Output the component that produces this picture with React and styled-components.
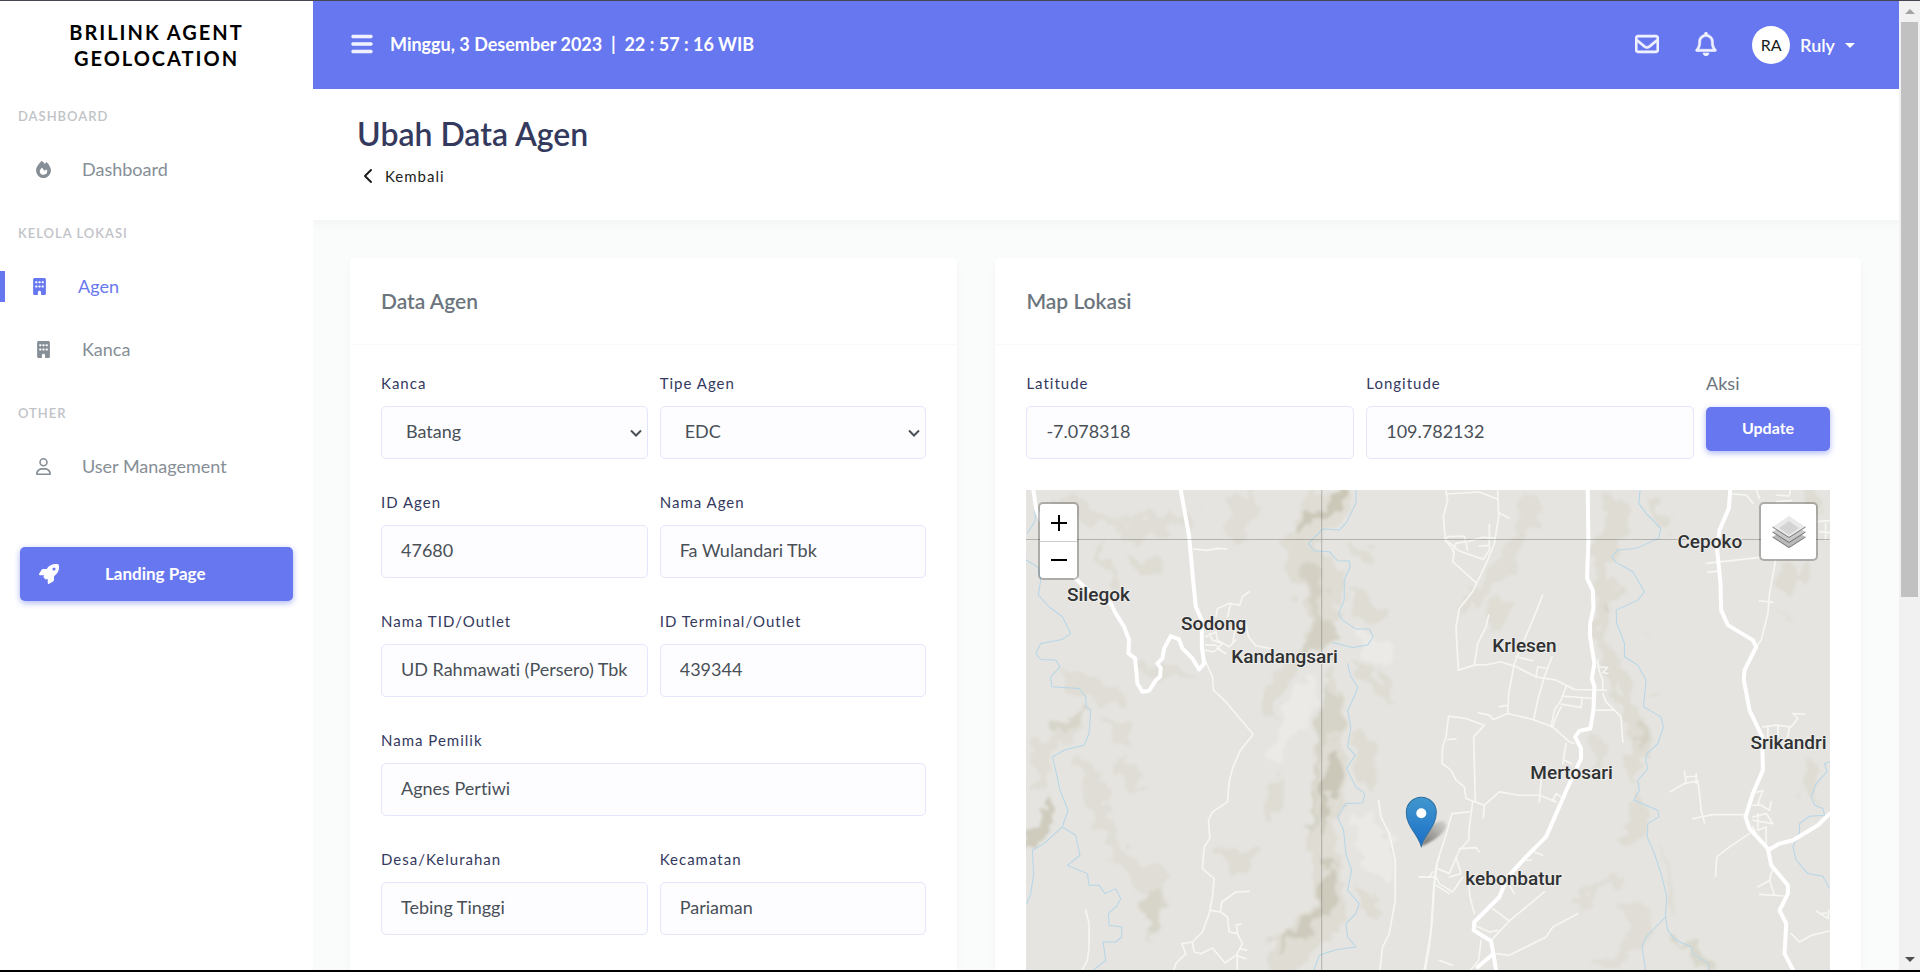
import React from "react";
import styled, { createGlobalStyle } from "styled-components";
import {
  FaBars,
  FaBuilding,
  FaChevronLeft,
  FaFire,
  FaRegBell,
  FaRegEnvelope,
  FaRegUser,
  FaRocket,
} from "react-icons/fa6";

const color = {
  primary: "#6777ef",
  heading: "#34395e",
  muted: "#6c757d",
  nav: "#868e96",
  field: "#495057",
};

const GlobalStyle = createGlobalStyle`
  *, *::before, *::after { box-sizing: border-box; }
  body {
    margin: 0;
    background: #fff;
    color: ${color.muted};
    font: 400 18px/24px Lato, "Open Sans", sans-serif;
    font-variant-ligatures: none;
  }
  button, input, select { font: inherit; font-variant-ligatures: none; }
  a { color: inherit; text-decoration: none; }
  h1, h2, p, ul { margin: 0; padding: 0; }
`;

/* ---------- frame ---------- */

const Shell = styled.div`
  display: flex;
  height: 100vh;
  overflow: hidden;
  border-top: 1px solid #44454f;
  border-bottom: 2px solid #000;
`;

const Sidebar = styled.aside`
  flex: 0 0 313px;
  background: #fff;
`;

const Main = styled.main`
  flex: 1;
  min-width: 0;
  height: 100%;
  overflow: hidden;
  background: #fafcfb;
`;

const Scrollbar = styled.div`
  flex: 0 0 21px;
  display: flex;
  flex-direction: column;
  align-items: center;
  background: #f1f1f1;
`;

const ScrollArrow = styled.span`
  flex: 0 0 21px;
  display: grid;
  place-items: center;
  &::before {
    content: "";
    border: 5px solid transparent;
    border-top-width: ${(p) => (p.$up ? 0 : "5px")};
    border-bottom-width: ${(p) => (p.$up ? "5px" : 0)};
    border-top-color: ${(p) => (p.$up ? "transparent" : "#505050")};
    border-bottom-color: ${(p) => (p.$up ? "#a3a3a3" : "transparent")};
  }
`;

const ScrollTrack = styled.div`
  flex: 1;
  width: 17px;
`;

const ScrollThumb = styled.div`
  height: 62%;
  background: #c1c1c1;
`;

/* ---------- sidebar ---------- */

const Brand = styled.a`
  display: block;
  padding: 18px 50px 14px;
  color: #000;
  font-size: 20px;
  font-weight: 700;
  line-height: 26px;
  letter-spacing: 2px;
  text-align: center;
  text-transform: uppercase;
`;

const NavHeading = styled.p`
  padding: 19px 18px 10px;
  color: #bfc3c7;
  font-size: 13px;
  font-weight: 600;
  line-height: 25px;
  letter-spacing: 1px;
  text-transform: uppercase;
`;

const NavList = styled.ul`
  list-style: none;
`;

const NavLink = styled.a`
  display: flex;
  align-items: center;
  height: 63px;
  padding: 0 0 3px ${(p) => (p.$active ? 0 : 19)}px;
  color: ${(p) => (p.$active ? color.primary : color.nav)};
  &::before {
    content: "";
    display: ${(p) => (p.$active ? "block" : "none")};
    width: 5px;
    height: 31px;
    margin-right: 10px;
    background: ${color.primary};
  }
`;

const NavIcon = styled.span`
  flex: 0 0 48px;
  margin-right: 15px;
  display: grid;
  place-items: center;
  font-size: 17px;
`;

const LandingLink = styled.a`
  display: flex;
  align-items: center;
  height: 54px;
  margin: 48px 20px 0;
  padding-left: 19px;
  border-radius: 5px;
  background: ${color.primary};
  box-shadow: 0 2px 6px #acb5f6;
  color: #fff;
  font-size: 17px;
  font-weight: 700;
  svg {
    width: 20px;
    height: 20px;
    margin-right: 46px;
  }
`;

/* ---------- top bar and page header ---------- */

const TopBar = styled.header`
  display: flex;
  align-items: center;
  height: 88px;
  padding: 0 44px 3px 37px;
  background: ${color.primary};
  color: #fff;
`;

const BarButton = styled.button`
  display: grid;
  place-items: center;
  width: ${(p) => p.$width}px;
  height: 44px;
  padding: 0;
  border: 0;
  background: none;
  color: #f0f1ff;
  font-size: 24px;
  cursor: pointer;
  svg {
    stroke: currentColor;
    stroke-width: 12px;
  }
`;

const Clock = styled.time`
  flex: 1;
  margin-left: 19px;
  font-weight: 700;
  white-space: pre;
`;

const BarActions = styled.div`
  display: flex;
  align-items: center;
  gap: 34px;
`;

const UserMenu = styled.button`
  display: flex;
  align-items: center;
  gap: 10px;
  padding: 3px 0 0;
  border: 0;
  background: none;
  color: #fff;
  font-weight: 600;
  cursor: pointer;
  &::after {
    content: "";
    border: 5px solid transparent;
    border-top-color: #fff;
    border-bottom: 0;
  }
`;

const Avatar = styled.span`
  display: grid;
  place-items: center;
  width: 38px;
  height: 38px;
  border-radius: 50%;
  background: #fff;
  color: #191d21;
  font-size: 16px;
  font-weight: 400;
`;

const PageHeader = styled.section`
  height: 131px;
  padding: 25px 44px 0;
  background: #fff;
  box-shadow: 0 4px 8px rgba(0, 0, 0, 0.03);
`;

const PageTitle = styled.h1`
  color: ${color.heading};
  font-size: 32px;
  font-weight: 600;
  line-height: 40px;
`;

const BackLink = styled.a`
  display: inline-flex;
  align-items: center;
  gap: 9px;
  margin-top: 10px;
  padding-left: 5px;
  color: #191d21;
  font-size: 15px;
  letter-spacing: 1px;
  svg {
    width: 14px;
    height: 16px;
  }
`;

/* ---------- cards and form ---------- */

const Content = styled.div`
  display: grid;
  grid-template-columns: repeat(12, minmax(0, 1fr));
  column-gap: 38px;
  padding: 38px 38px 38px 37px;
`;

const Card = styled.section`
  grid-column: span ${(p) => p.$span};
  border-radius: 4px;
  background: #fff;
  box-shadow: 0 4px 8px rgba(0, 0, 0, 0.03);
`;

const CardTitle = styled.h2`
  padding: 30px 31px 31px;
  border-bottom: 1px solid #f9f9f9;
  color: ${color.muted};
  font-size: 21px;
  font-weight: 600;
  line-height: 25px;
`;

const CardBody = styled.div`
  padding: 26px 31px 31px;
`;

const FormGrid = styled.form`
  display: grid;
  grid-template-columns: repeat(12, minmax(0, 1fr));
  column-gap: 12px;
`;

const Field = styled.div`
  position: relative;
  grid-column: span ${(p) => p.$span};
  display: flex;
  flex-direction: column;
  margin-bottom: 31px;
`;

const Label = styled.label`
  margin-bottom: 10px;
  color: ${color.heading};
  font-size: 15px;
  line-height: 25px;
  letter-spacing: 1px;
`;

const control = `
  width: 100%;
  height: 53px;
  border: 1px solid #e4e6fc;
  border-radius: 5px;
  background: #fdfdff;
  color: ${color.field};
`;

const TextBox = styled.input`
  ${control}
  padding: 0 16px 3px 19px;
`;

const SelectBox = styled.select`
  ${control}
  appearance: none;
  padding: 0 24px 3px;
`;

const SelectArrow = styled.svg`
  position: absolute;
  right: 6px;
  bottom: 20px;
  width: 12px;
  height: 12px;
  pointer-events: none;
`;

const ActionTitle = styled.p`
  margin-bottom: 11px;
  line-height: 25px;
`;

const SubmitButton = styled.button`
  height: 44px;
  padding: 0 0 2px;
  border: 0;
  border-radius: 5px;
  background: ${color.primary};
  box-shadow: 0 2px 6px #acb5f6;
  color: #fff;
  font-size: 16px;
  font-weight: 700;
  cursor: pointer;
`;

/* ---------- map ---------- */

const MapFrame = styled.div`
  position: relative;
  height: 625px;
  background: #e5e4e0;
`;

const MapDrawing = styled.svg`
  display: block;
  width: 100%;
  height: 100%;
  text {
    fill: #303234;
    stroke: #eeedea;
    stroke-width: 2px;
    paint-order: stroke;
    font: 500 19px Roboto, sans-serif;
  }
`;

const MapControl = styled.div`
  position: absolute;
  top: 12px;
  ${(p) => p.$side}: 12px;
  border: 2px solid rgba(0, 0, 0, 0.25);
  border-radius: 5px;
  background: #fff;
  background-clip: padding-box;
`;

const MapButton = styled.button`
  display: grid;
  place-items: center;
  width: ${(p) => p.$size}px;
  height: ${(p) => p.$size}px;
  padding: 0;
  border: 0;
  background: none;
  cursor: pointer;
  & + & {
    border-top: 1px solid #ccc;
  }
`;

const WEST = "translate(-27 -10) scale(0.33333)";
const EAST = "translate(393 -10) scale(0.33333)";

const shade = [
  ["#dfddd4", "M960 30H1060C1065 70 1050 120 1000 135 960 150 940 200 930 230 890 280 860 250 850 215 850 150 900 110 960 30Z"],
  ["#cbc8b8", "M1000 30H1045C1045 80 1010 105 970 120 930 140 900 165 885 165 880 130 930 110 955 95 985 80 990 50 1000 30Z"],
  ["#dedcd3", "M850 215C900 190 960 190 1000 240 1040 280 1030 340 1020 390 1015 440 990 480 960 500 910 540 880 570 850 620 840 660 820 710 800 720 760 720 770 670 800 620 830 580 880 530 920 500 940 450 920 370 900 330 880 300 850 250 850 215Z"],
  ["#d4d1c4", "M930 240C970 260 975 300 975 330 965 370 960 400 985 430 1000 440 1010 450 1010 460 990 490 940 520 915 540 890 540 910 500 940 460 945 420 930 390 920 340 910 300 910 260 930 240Z"],
  ["#dedcd3", "M985 560C1010 580 1030 620 1025 700 1020 730 1035 800 1040 920 1030 960 1010 980 1010 1000 1005 1060 1015 1120 1040 1220 1040 1280 1030 1330 1000 1370 960 1400 940 1420 900 1468H810C810 1420 820 1380 830 1370 860 1360 900 1340 940 1240 935 1160 925 1120 925 1080 940 980 950 940 950 900 940 820 930 780 970 650Z"],
  ["#cbc8b9", "M1000 810C1030 820 1030 870 1020 900 1000 930 1000 1000 985 1050 970 1090 960 1060 970 980 975 920 980 850 1000 810Z"],
  ["#cecbbd", "M985 1140C1010 1150 1020 1200 1010 1270 990 1310 950 1330 900 1370 870 1400 850 1420 845 1420 840 1390 870 1350 920 1330 950 1290 970 1200 985 1140Z"],
  ["#d6d4c8", "M985 620C1010 620 1020 680 1010 740 980 790 960 850 955 890 960 950 955 1010 940 1050 920 1070 935 1000 935 950 950 890 950 830 950 760 960 700 985 620Z"],
  ["#dfddd5", "M81 800C130 790 170 780 210 720 230 690 240 665 245 665 260 720 250 750 230 770 190 790 165 800 160 820 150 870 140 920 110 920 81 890Z"],
  ["#cfccbe", "M150 945C190 960 185 1020 165 1040 140 1070 110 1100 81 1115V1050C110 1040 130 1020 130 980Z"],
  ["#dfddd5", "M160 50C220 50 250 60 300 100 350 110 390 110 400 150 350 150 310 140 270 130 240 130 190 90 160 50Z"],
  ["#dfddd5", "M440 90C480 110 540 110 590 110 590 150 560 150 520 140 490 160 440 175 380 180 370 150 410 110 440 90Z"],
  ["#dedcd3", "M300 190C320 190 320 230 330 250 370 280 370 300 360 320 330 310 290 260 290 230ZM370 220C420 220 470 240 480 270 470 300 440 290 400 270Z"],
  ["#dfddd5", "M660 50C710 40 750 60 770 40 780 80 760 130 730 150 710 180 690 190 680 170 690 140 700 120 700 90Z"],
  ["#dfddd5", "M400 545C440 560 540 550 590 570 580 600 510 600 470 580 430 580 410 580 400 570ZM180 590C240 560 320 600 380 640 400 660 380 680 310 670 260 660 220 640 180 590Z"],
  ["#dfddd5", "M240 830C290 840 310 920 320 960 340 1030 370 1090 440 1160 490 1150 500 1180 500 1200 500 1250 480 1290 470 1370 440 1380 430 1350 440 1240 400 1200 350 1190 300 1040 270 980 240 900 240 830Z"],
  ["#dfddd5", "M350 820C400 830 410 870 420 900 450 910 470 920 450 930 400 930 370 900 350 870ZM310 720C360 730 400 740 400 760 410 820 380 810 350 790Z"],
  ["#dedcd3", "M650 1100C700 1100 720 1130 760 1110 780 1140 760 1180 700 1180 670 1160 650 1130 650 1100ZM850 885C870 920 850 980 800 1010 780 1000 810 950 850 885Z"],
  ["#dedcd3", "M1040 190C1100 190 1130 210 1140 250 1110 260 1080 250 1040 190ZM1050 320C1110 330 1160 370 1170 410 1160 450 1110 440 1080 420 1060 390 1050 360 1050 320ZM1060 550C1110 550 1170 600 1195 660 1160 660 1120 650 1060 550ZM1060 760C1110 770 1140 810 1130 930 1100 930 1080 900 1060 760ZM1060 1220C1120 1230 1160 1270 1150 1310 1110 1310 1080 1290 1060 1220Z"],
  ["#d7d5c9", "M455 1220C490 1220 490 1260 475 1300 470 1350 450 1370 440 1340 440 1300 440 1250 455 1220ZM155 740C200 740 230 700 240 670 260 700 230 740 200 760 170 770 150 760 155 740Z"],
  ["#ebeae7", "M930 580C970 600 950 640 940 680 910 740 860 790 850 840 820 880 800 860 830 760 850 700 900 620 930 580Z"],
  ["#ebeae7", "M1080 460C1150 460 1220 480 1180 550 1120 560 1070 520 1080 460ZM1070 1000C1130 1010 1180 1060 1180 1120 1190 1170 1160 1220 1100 1180 1070 1120 1060 1060 1070 1000Z"],
];

const shadeEast = [
  ["#dfddd5", "M310 40C350 30 390 40 350 130 320 170 300 220 280 270 240 310 210 330 170 370 150 390 120 390 150 340 190 310 220 260 250 200 290 150 310 90 310 40Z"],
  ["#dedcd3", "M540 40C580 40 640 80 640 120 640 150 600 160 590 220 550 240 550 300 610 330 600 370 570 390 560 400 550 440 560 500 600 540 620 590 620 650 690 750 690 810 670 860 640 900 610 910 620 820 640 780 620 730 600 690 590 620 550 580 530 520 520 440 520 360 510 290 525 230 540 180 590 140 540 40Z"],
  ["#d5d2c4", "M560 380C580 370 590 385 565 405ZM655 740C680 740 680 790 655 790Z"],
  ["#dedcd3", "M670 50C710 60 750 100 750 130 740 180 710 150 670 50ZM640 900C690 950 710 1000 670 1060 640 1100 600 1100 600 1070 640 1020 650 960 640 900Z"],
  ["#dfddd5", "M510 760C560 760 590 790 570 830 540 860 510 870 500 860 530 820 520 790 510 760ZM600 1270C660 1270 710 1300 700 1350 690 1390 640 1410 600 1468H520C540 1430 600 1400 640 1380 650 1340 620 1300 600 1270Z"],
  ["#dfddd5", "M480 1220C530 1200 570 1210 600 1180 620 1200 600 1240 510 1240 500 1260 510 1290 480 1300 470 1260 480 1240 480 1220ZM720 1080C750 1130 770 1260 780 1310 740 1300 740 1200 720 1080Z"],
  ["#dedcd3", "M1070 240C1130 230 1170 260 1150 310 1130 340 1110 350 1070 330ZM1090 390C1120 400 1120 430 1110 430ZM1160 30C1210 40 1210 100 1190 130 1150 140 1150 80 1160 30ZM1170 840C1220 840 1190 900 1180 920 1190 970 1180 1000 1160 950 1140 910 1150 870 1170 840Z"],
  ["#dad8cc", "M750 1360C800 1380 860 1400 880 1440V1468C820 1450 800 1410 750 1360Z"],
  ["#dfddd4", "M210 370C250 350 290 370 280 400 260 440 220 460 200 430ZM655 470C690 470 700 490 680 490ZM700 620C730 640 720 650 700 650Z"],
];

const rivers = [
  "M105 90C120 120 95 140 85 160M81 240 118 262 125 300 118 345 150 380 190 410 215 460 190 478 125 490 110 520 125 538 170 540 183 560 155 590 158 620 240 625 260 650 262 680 275 690 270 760 255 795 200 808 160 830 170 870 183 930 207 990 190 1040 135 1090 100 1110 104 1180 95 1240 84 1270",
  "M190 1040 230 1065 243 1125 205 1155 265 1180 270 1215 300 1215 318 1240 350 1225 365 1255 355 1275 328 1300 330 1335 368 1340 368 1370 350 1385 312 1385 320 1440 285 1468",
  "M1070 30V70L1040 130 1020 150 970 147 928 190 945 212 990 215 1015 242 1050 243 1053 260 1035 300V360L1018 400 1030 420 1070 447 1110 447 1122 470 1105 495 1060 502 1000 487",
  "M1045 550 1055 590 1075 620 1065 650 1045 690 1055 740 1045 800 1068 825 1042 865 1070 920 1097 940 1090 968 1040 970 1015 1010 1033 1050 1040 1120 1057 1170 1045 1230 1080 1270 1070 1300 1040 1330 1045 1370 1070 1400 1010 1408 960 1425 945 1468",
];

const riversEast = [
  "M662 30 658 70 680 100 724 145 718 175 650 205 595 210 577 230 590 247 640 275 675 335 655 360 590 390 592 430 615 490V530L655 555 680 600 672 680 725 710 732 740 715 790 683 820 678 840 686 865 655 900 660 930 643 960 715 990 718 1010 685 1030 683 1070 705 1120 725 1180 742 1250 738 1310 680 1370 668 1400 678 1468M738 1310 745 1350 770 1380 815 1400 820 1420 868 1450V1468",
  "M1230 845 1215 850 1222 875 1190 910 1175 950 1185 975 1210 985 1215 1005 1170 1008 1140 1030V1055L1120 1100 1130 1140 1165 1180 1210 1188 1228 1222",
];

const lanes = [
  "M583 207 625 211 655 205 683 207",
  "M650 410 655 385 690 370 722 375 730 350 750 335M695 370 685 410M740 430 748 470 770 497 815 505",
  "M620 470 650 455 655 480 690 500 710 480M615 510 645 515 670 490 640 480 630 460M655 505 680 520M620 495 650 495 665 510M710 440 700 490",
  "M620 545 640 590 643 630 680 665 762 762 723 812 700 865 690 905 685 965 640 995 628 1020 632 1075 615 1100 610 1165 645 1195 640 1250 630 1300 610 1355 580 1385 548 1390 560 1420 530 1450 525 1468",
  "M580 1385 585 1415 605 1420 640 1403 678 1448 710 1425 740 1435M635 1290 665 1295 685 1310 690 1355 715 1360 730 1390 714 1420V1468M665 1290 668 1265 710 1235 750 1233M715 1360 712 1335 725 1330M725 1405 742 1410",
  "M260 1290 270 1330V1400L265 1440 250 1468M1138 960 1145 1010 1170 1060 1188 1140V1260L1170 1360 1150 1400 1142 1468M1275 1468 1295 1350 1303 1220 1310 1160 1320 1130M1262 1190 1290 1190 1300 1175",
];

const lanesEast = [
  "M80 30 85 60 72 110 78 180 105 215 100 245 170 308M80 42 180 36 235 58M235 30 238 110 225 190 205 240 160 335 120 385 110 440 117 570 165 555 205 553 245 545 290 560 350 590 410 600 465 628 560 630",
  "M238 98 270 115M210 132V210L192 238 118 212 90 188 78 182 85 170 135 168 145 210M100 215 110 190 135 185M145 185 190 172 225 175M180 198 210 196",
  "M370 345 340 420 310 490 285 550 268 640 265 700M208 405 200 440 175 490 165 555M398 530 375 590 355 660 343 718M350 590 355 560 385 565 375 590M290 530 340 542",
  "M88 708 140 715 195 735M178 698 210 705 222 718 265 700 340 718 400 740 450 785 465 790M240 680 265 675M195 735 163 770 165 850 168 965M88 708 80 770 70 800 68 850 95 870 110 900 135 920 140 955 195 975 240 935 300 945 360 945 410 965M85 778 110 776",
  "M195 975 192 1012M160 965 150 1040 148 1080 120 1110 90 1180 55 1165M150 995 98 1000 75 1080 55 1140 45 1220 38 1330 30 1400 18 1468M120 1105 170 1102 180 1115M110 1130 125 1180 90 1190M0 1190 50 1190 60 1210 100 1235 130 1190M50 1215 90 1240M145 1180 152 1250 165 1300",
  "M440 620 425 660 405 690 395 740M430 648 525 655M425 672 485 682 488 655M465 628 440 615M400 740 410 710 425 680M535 540 540 575 550 600V628M535 560 565 562 550 577 565 580M550 640 560 665 605 710 610 785M530 690 580 690M430 850 440 790M435 840 455 850M360 965 365 900M400 960 410 940 425 950",
  "M220 1285 270 1322 375 1235M270 1322 220 1375M165 1335 210 1355 235 1350M185 1380 178 1440 155 1468M230 1420 270 1425 380 1370 400 1340 475 1300M60 1440 100 1455M320 1140 335 1140M345 1115 370 1125M270 1215 285 1240",
  "M862 250 1020 232M865 277 895 273M1068 240 1050 340 1045 400 1025 480 1010 500M1020 362 1060 367M940 42 980 45 1000 70M1010 30 1020 55M1070 45 1110 48 1112 30M1070 65 1115 62M1195 125 1230 122M1200 155 1230 158M1218 130V180",
  "M1030 740 1070 735 1115 740 1135 715 1120 700 1155 702M1045 740V780M1075 735V770M1110 740 1100 790",
  "M752 935 795 910 835 902 840 940 845 990 855 1028M795 875 800 910M830 880V910M800 890 830 888M820 1015 880 1003 975 1003M888 1188 892 1130 930 1100 990 1060",
  "M1000 940 1030 930 1015 970 1050 990 1055 965M1000 1010 1040 1000 1060 1030 1000 1020M1000 975 1030 975M1015 1000V1050L1040 1040V1090M1010 1060 1000 1040M1060 1160 1050 1200 1015 1220M1050 1200 1065 1245M1020 1242 1090 1247M1115 1360 1140 1385 1175 1365 1230 1352M1190 1292 1225 1315 1228 1290M1205 1300 1220 1298",
];

const roads = [
  "M103 30 112 90 125 120M225 290 250 315 290 350 335 370 350 400 375 440 390 480 388 520 408 535 415 610 430 635 450 632 470 600 483 590 485 565 475 550 490 535 495 505 515 468 540 478 550 505 580 535 600 568 615 550 608 500 608 420 590 380 582 300 570 170 545 30",
];

const roadsEast = [
  "M505 30 507 180 503 295 520 330 522 385 512 430 512 470 525 550 517 595 525 620 522 690 513 745 480 752 467 770 485 805 485 835 450 910 415 990 380 1070 320 1130 265 1190 240 1250 165 1325 163 1350 215 1382 222 1420 175 1460M222 1420 230 1468",
  "M932 30 928 85 900 150 893 210 903 310 905 390 925 435 1000 480 1010 500 975 570 973 600 990 690 1028 770 1030 870 1000 940 978 1010 990 1045 1045 1105 1055 1155 1105 1215 1105 1240 1080 1290 1100 1330 1095 1420 1120 1468M1045 1110 1080 1090 1120 1080 1195 1035 1230 1000",
];

const places = [
  ["Silegok", 41, 111],
  ["Sodong", 155, 140],
  ["Kandangsari", 205, 173],
  ["Krlesen", 466, 162],
  ["Cepoko", 651, 58],
  ["Srikandri", 724, 259],
  ["Mertosari", 504, 289],
  ["kebonbatur", 439, 395],
];

function Sheet({ transform, shades, water, small, large }) {
  return (
    <g transform={transform} fill="none" strokeLinecap="round" strokeLinejoin="round">
      <g filter="url(#relief)">
        {shades.map(([fill, d]) => (
          <path key={d} d={d} fill={fill} />
        ))}
      </g>
      {water.map((d) => <path key={d} d={d} stroke="#b5d6e8" strokeWidth="3" />)}
      {small.map((d) => <path key={d} d={d} stroke="#f6f6f2" strokeWidth="5" />)}
      {large.map((d) => <path key={d} d={d} stroke="#fff" strokeWidth="12" />)}
    </g>
  );
}

function TerrainMap() {
  return (
    <MapDrawing
      viewBox="0 0 803 625"
      preserveAspectRatio="xMidYMin slice"
      role="img"
      aria-label="Map Lokasi"
    >
      <defs>
        <filter id="relief" x="-5%" y="-5%" width="110%" height="110%">
          <feTurbulence type="fractalNoise" baseFrequency="0.02" numOctaves="2" seed="4" result="noise" />
          <feDisplacementMap in="SourceGraphic" in2="noise" scale="90" xChannelSelector="R" yChannelSelector="G" />
          <feGaussianBlur stdDeviation="5" />
        </filter>
        <filter id="soft">
          <feGaussianBlur stdDeviation="1" />
        </filter>
        <linearGradient id="pin" x2="0" y2="1">
          <stop offset="0" stopColor="#4197ce" />
          <stop offset="1" stopColor="#1b6fc8" />
        </linearGradient>
        <linearGradient id="pinShadow" x2="1" y1="1" y2="0">
          <stop offset="0" stopColor="#000" stopOpacity="0.5" />
          <stop offset="0.9" stopColor="#000" stopOpacity="0.1" />
        </linearGradient>
      </defs>
      <rect width="803" height="625" fill="#e5e4e0" />
      <Sheet transform={WEST} shades={shade} water={rivers} small={lanes} large={roads} />
      <Sheet transform={EAST} shades={shadeEast} water={riversEast} small={lanesEast} large={roadsEast} />
      <path d="M0 49.500H803M295.500 0V625" stroke="#000" strokeOpacity="0.22" fill="none" />
      {places.map(([name, x, y]) => (
        <text key={name} x={x} y={y}>{name}</text>
      ))}
      <path
        d="M395 356C403 353 419 344 420 335C419 327 404 328 395 356Z"
        fill="url(#pinShadow)"
        filter="url(#soft)"
      />
      <path
        d="M395 356C391 343 380 336 380 322A15 15 0 0 1 410 322C410 336 399 343 395 356Z"
        fill="url(#pin)"
        stroke="#2e6f9f"
      />
      <circle cx="395" cy="323" r="5" fill="#fff" />
    </MapDrawing>
  );
}

function LayersIcon() {
  return (
    <svg width="34" height="34" viewBox="0 0 34 34" aria-hidden="true">
      <path d="M17 12 33.500 22 17 33 .5 22Z" fill="#b9b9b9" />
      <path d="M.5 22 17 32.500 33.500 22" fill="none" stroke="#777" />
      <path d="M17 7 33.500 17 17 28 .5 17Z" fill="#c9c9c9" />
      <path d="M.5 17 17 27.500 33.500 17" fill="none" stroke="#6e6e6e" />
      <path d="M17 1 33.500 12 17 22.500 .5 12Z" fill="#e9e9e9" />
      <path d="M17 6 27 13 17 20 7 13Z" fill="#d4d4d4" />
      <path d="M.5 12 17 22.500 33.500 12" fill="none" stroke="#777" />
    </svg>
  );
}

function NavItem({ icon: Icon, label, active }) {
  return (
    <li>
      <NavLink href="#" $active={active} aria-current={active ? "page" : undefined}>
        <NavIcon><Icon /></NavIcon>
        {label}
      </NavLink>
    </li>
  );
}

function TextField({ id, label, value, span = 6 }) {
  return (
    <Field $span={span}>
      <Label htmlFor={id}>{label}</Label>
      <TextBox id={id} defaultValue={value} />
    </Field>
  );
}

function SelectField({ id, label, value }) {
  return (
    <Field $span={6}>
      <Label htmlFor={id}>{label}</Label>
      <SelectBox id={id} defaultValue={value}>
        <option>{value}</option>
      </SelectBox>
      <SelectArrow viewBox="0 0 12 12" aria-hidden="true">
        <path d="M1 3.500 6 8.500 11 3.500" fill="none" stroke="#495057" strokeWidth="2" />
      </SelectArrow>
    </Field>
  );
}

export default function App() {
  return (
    <>
      <GlobalStyle />
      <Shell>
        <Sidebar>
          <Brand href="#">Brilink Agent Geolocation</Brand>
          <nav>
            <NavHeading>Dashboard</NavHeading>
            <NavList>
              <NavItem icon={FaFire} label="Dashboard" />
            </NavList>
            <NavHeading>Kelola Lokasi</NavHeading>
            <NavList>
              <NavItem icon={FaBuilding} label="Agen" active />
              <NavItem icon={FaBuilding} label="Kanca" />
            </NavList>
            <NavHeading>Other</NavHeading>
            <NavList>
              <NavItem icon={FaRegUser} label="User Management" />
            </NavList>
          </nav>
          <LandingLink href="#"><FaRocket />Landing Page</LandingLink>
        </Sidebar>

        <Main>
          <TopBar>
            <BarButton $width={21} aria-label="Menu"><FaBars /></BarButton>
            <Clock>{"Minggu, 3 Desember 2023  |  22 : 57 : 16 WIB"}</Clock>
            <BarActions>
              <BarButton $width={26} aria-label="Pesan"><FaRegEnvelope /></BarButton>
              <BarButton $width={24} aria-label="Notifikasi"><FaRegBell /></BarButton>
              <UserMenu><Avatar>RA</Avatar>Ruly</UserMenu>
            </BarActions>
          </TopBar>

          <PageHeader>
            <PageTitle>Ubah Data Agen</PageTitle>
            <BackLink href="#"><FaChevronLeft />Kembali</BackLink>
          </PageHeader>

          <Content>
            <Card $span={5}>
              <CardTitle>Data Agen</CardTitle>
              <CardBody>
                <FormGrid>
                  <SelectField id="kanca" label="Kanca" value="Batang" />
                  <SelectField id="tipe" label="Tipe Agen" value="EDC" />
                  <TextField id="id-agen" label="ID Agen" value="47680" />
                  <TextField id="nama-agen" label="Nama Agen" value="Fa Wulandari Tbk" />
                  <TextField id="nama-tid" label="Nama TID/Outlet" value="UD Rahmawati (Persero) Tbk" />
                  <TextField id="id-terminal" label="ID Terminal/Outlet" value="439344" />
                  <TextField id="pemilik" label="Nama Pemilik" value="Agnes Pertiwi" span={12} />
                  <TextField id="desa" label="Desa/Kelurahan" value="Tebing Tinggi" />
                  <TextField id="kecamatan" label="Kecamatan" value="Pariaman" />
                </FormGrid>
              </CardBody>
            </Card>

            <Card $span={7}>
              <CardTitle>Map Lokasi</CardTitle>
              <CardBody>
                <FormGrid>
                  <TextField id="lat" label="Latitude" value="-7.078318" span={5} />
                  <TextField id="lng" label="Longitude" value="109.782132" span={5} />
                  <Field $span={2}>
                    <ActionTitle>Aksi</ActionTitle>
                    <SubmitButton type="button">Update</SubmitButton>
                  </Field>
                </FormGrid>
                <MapFrame>
                  <TerrainMap />
                  <MapControl $side="left">
                    <MapButton $size={37} aria-label="Zoom in">
                      <svg width="16" height="16"><path d="M8 0V16M0 8H16" stroke="#000" strokeWidth="2" /></svg>
                    </MapButton>
                    <MapButton $size={37} aria-label="Zoom out">
                      <svg width="16" height="16"><path d="M0 8H16" stroke="#000" strokeWidth="2" /></svg>
                    </MapButton>
                  </MapControl>
                  <MapControl $side="right">
                    <MapButton $size={55} aria-label="Layers"><LayersIcon /></MapButton>
                  </MapControl>
                </MapFrame>
              </CardBody>
            </Card>
          </Content>
        </Main>

        <Scrollbar aria-hidden="true">
          <ScrollArrow $up />
          <ScrollTrack><ScrollThumb /></ScrollTrack>
          <ScrollArrow />
        </Scrollbar>
      </Shell>
    </>
  );
}
